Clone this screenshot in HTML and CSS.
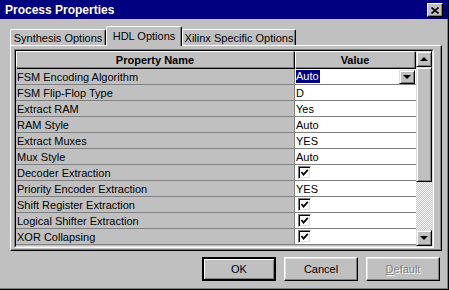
FILE: index.html
```html
<!DOCTYPE html>
<html>
    <head>
        <title>Process Properties</title>
        <link rel="stylesheet" href="styles.css">
    </head>
    <body>
        <div class="window">
            <div class="titlebar">
                <span class="title">Process Properties</span>
                <div class="close-btn">
                    <svg width="8" height="7" viewBox="0 0 8 7"><path d="M0.5 0.5 L7.5 6.5 M7.5 0.5 L0.5 6.5" stroke="#000" stroke-width="1.6" fill="none"/></svg>
                </div>
            </div>

            <div class="tabs">
                <div class="tab tab-synth">Synthesis Options</div>
                <div class="tab tab-hdl active">HDL Options</div>
                <div class="tab tab-xilinx">Xilinx Specific Options</div>
            </div>

            <div class="panel">
                <div class="grid">
                    <div class="grid-inner">
                        <div class="sheet">
                            <div class="head">Property Name</div>
                            <div class="head">Value</div>

                            <div class="name">FSM Encoding Algorithm</div>
                            <div class="value combo">
                                <span class="selected">Auto</span>
                                <span class="drop"><span class="arrow-down"></span></span>
                            </div>

                            <div class="name">FSM Flip-Flop Type</div>
                            <div class="value">D</div>

                            <div class="name">Extract RAM</div>
                            <div class="value">Yes</div>

                            <div class="name">RAM Style</div>
                            <div class="value">Auto</div>

                            <div class="name">Extract Muxes</div>
                            <div class="value">YES</div>

                            <div class="name">Mux Style</div>
                            <div class="value">Auto</div>

                            <div class="name">Decoder Extraction</div>
                            <div class="value"><span class="check"><svg width="9" height="9" viewBox="0 0 9 9"><path d="M1.5 4 L3.5 6.5 L7.8 1.8" stroke="#000" stroke-width="1.8" fill="none"/></svg></span></div>

                            <div class="name">Priority Encoder Extraction</div>
                            <div class="value">YES</div>

                            <div class="name">Shift Register Extraction</div>
                            <div class="value"><span class="check"><svg width="9" height="9" viewBox="0 0 9 9"><path d="M1.5 4 L3.5 6.5 L7.8 1.8" stroke="#000" stroke-width="1.8" fill="none"/></svg></span></div>

                            <div class="name">Logical Shifter Extraction</div>
                            <div class="value"><span class="check"><svg width="9" height="9" viewBox="0 0 9 9"><path d="M1.5 4 L3.5 6.5 L7.8 1.8" stroke="#000" stroke-width="1.8" fill="none"/></svg></span></div>

                            <div class="name">XOR Collapsing</div>
                            <div class="value"><span class="check"><svg width="9" height="9" viewBox="0 0 9 9"><path d="M1.5 4 L3.5 6.5 L7.8 1.8" stroke="#000" stroke-width="1.8" fill="none"/></svg></span></div>
                        </div>

                        <div class="scrollbar">
                            <div class="sb-btn"><span class="arrow-up"></span></div>
                            <div class="sb-thumb"></div>
                            <div class="sb-track"></div>
                            <div class="sb-btn"><span class="arrow-down"></span></div>
                        </div>
                    </div>
                </div>
            </div>

            <div class="buttons">
                <div class="btn btn-default">OK</div>
                <div class="btn">Cancel</div>
                <div class="btn disabled"><u>D</u>efault</div>
            </div>
        </div>
    </body>
</html>
```

FILE: styles.css
```css
body {
    margin: 0;
    background-color: #c0c0c0;
    font-family: 'Liberation Sans', Arial, sans-serif;
    font-size: 11px;
    color: #000;
}
.window {
    width: 449px;
    height: 290px;
    box-sizing: border-box;
    background-color: #c0c0c0;
    border-right: 1px solid #000;
    border-bottom: 1px solid #000;
    box-shadow: inset -1px -1px #808080;
    overflow: hidden;
}

/* title bar */
.titlebar {
    height: 19px;
    background-color: #000080;
    display: flex;
    align-items: center;
    justify-content: space-between;
    padding: 0 5px 0 5px;
}
.title {
    color: #fff;
    font-weight: bold;
    font-size: 12px;
}
.close-btn {
    width: 16px;
    height: 14px;
    box-sizing: border-box;
    background-color: #c0c0c0;
    border: 1px solid;
    border-color: #fff #000 #000 #fff;
    box-shadow: inset -1px -1px #808080;
    display: flex;
    align-items: center;
    justify-content: center;
    margin-top: 1px;
}

/* tabs */
.tabs {
    display: flex;
    align-items: flex-end;
    height: 19px;
    margin: 7px 0 0 10px;
}
.tab {
    height: 16px;
    box-sizing: border-box;
    border: 1px solid;
    border-bottom: none;
    border-color: #fff #000 transparent #fff;
    border-radius: 2px 2px 0 0;
    box-shadow: inset -1px 0 #808080;
    display: flex;
    align-items: center;
    justify-content: center;
    padding-top: 1px;
}
.tab-synth {
    width: 96px;
}
.tab-hdl {
    width: 76px;
}
.tab-xilinx {
    width: 114px;
}
.tab.active {
    height: 20px;
    margin-bottom: -1px;
    position: relative;
    z-index: 1;
    background-color: #c0c0c0;
    padding-bottom: 2px;
}

/* panel */
.panel {
    width: 432px;
    height: 206px;
    box-sizing: border-box;
    margin-left: 10px;
    border: 1px solid;
    border-color: #fff #000 #000 #fff;
    box-shadow: inset -1px -1px #808080;
    padding: 3px 0 0 3px;
}
.grid {
    width: 420px;
    height: 199px;
    box-sizing: border-box;
    border: 1px solid;
    border-color: #808080 #fff #fff #808080;
}
.grid-inner {
    height: 100%;
    box-sizing: border-box;
    border: 1px solid;
    border-color: #000 #dfdfdf #dfdfdf #000;
    display: flex;
    background-color: #c0c0c0;
}
.sheet {
    width: 400px;
    display: grid;
    grid-template-columns: 279px 121px;
    grid-template-rows: 18px;
    grid-auto-rows: 16px;
    align-content: start;
}
.head {
    box-sizing: border-box;
    border: 1px solid;
    border-color: #fff #808080 #808080 #fff;
    box-shadow: 1px 1px #000;
    font-weight: bold;
    display: flex;
    align-items: center;
    justify-content: center;
    margin-right: 1px;
    margin-bottom: 1px;
}
.name,
.value {
    box-sizing: border-box;
    border-bottom: 1px solid #808080;
    display: flex;
    align-items: center;
    padding-left: 1px;
    white-space: nowrap;
}
.name {
    border-right: 1px solid #808080;
}
.value {
    background-color: #fff;
    padding-left: 1px;
}
.combo {
    justify-content: space-between;
    padding-right: 1px;
}
.selected {
    background-color: #000080;
    color: #fff;
    line-height: 13px;
    padding-right: 1px;
}
.drop {
    width: 16px;
    height: 14px;
    box-sizing: border-box;
    background-color: #c0c0c0;
    border: 1px solid;
    border-color: #dfdfdf #000 #000 #dfdfdf;
    box-shadow: inset 1px 1px #fff, inset -1px -1px #808080;
    display: flex;
    align-items: center;
    justify-content: center;
}
.check {
    width: 13px;
    height: 13px;
    box-sizing: border-box;
    border: 1px solid;
    border-color: #808080 #fff #fff #808080;
    box-shadow: inset 1px 1px #000, inset -1px -1px #dfdfdf;
    display: flex;
    align-items: center;
    justify-content: center;
    margin-left: 2px;
    background-color: #fff;
}

/* scrollbar */
.scrollbar {
    width: 16px;
    display: flex;
    flex-direction: column;
}
.sb-btn,
.sb-thumb {
    box-sizing: border-box;
    background-color: #c0c0c0;
    border: 1px solid;
    border-color: #dfdfdf #000 #000 #dfdfdf;
    box-shadow: inset 1px 1px #fff, inset -1px -1px #808080;
}
.sb-btn {
    height: 16px;
    display: flex;
    align-items: center;
    justify-content: center;
}
.sb-thumb {
    height: 115px;
}
.sb-track {
    flex: 1;
    background: repeating-conic-gradient(#c0c0c0 0 25%, #fff 0 50%) 0 0 / 2px 2px;
}
.arrow-up {
    width: 0;
    height: 0;
    border-left: 4px solid transparent;
    border-right: 4px solid transparent;
    border-bottom: 4px solid #000;
}
.arrow-down {
    width: 0;
    height: 0;
    border-left: 4px solid transparent;
    border-right: 4px solid transparent;
    border-top: 4px solid #000;
}

/* dialog buttons */
.buttons {
    display: flex;
    justify-content: flex-end;
    gap: 8px;
    margin-top: 6px;
    padding-right: 8px;
}
.btn {
    width: 74px;
    height: 24px;
    box-sizing: border-box;
    border: 1px solid;
    border-color: #fff #000 #000 #fff;
    box-shadow: inset -1px -1px #808080, inset 1px 1px #dfdfdf;
    display: flex;
    align-items: center;
    justify-content: center;
}
.btn-default {
    border: 2px solid;
    border-color: #000;
    box-shadow: inset 1px 1px #fff, inset -1px -1px #808080;
}
.btn.disabled {
    color: #808080;
    text-shadow: 1px 1px #fff;
}
```
